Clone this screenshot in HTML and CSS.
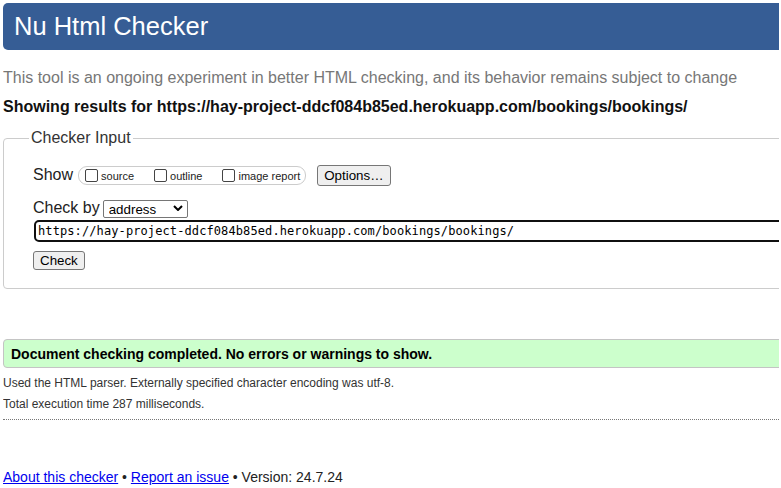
FILE: index.html
```html
<!DOCTYPE html>
<html lang="en">
<head>
<meta charset="utf-8">
<title>Nu Html Checker</title>
<link rel="stylesheet" href="styles.css">
</head>
<body>
<div class="page">
  <h1 class="title">Nu Html Checker</h1>
  <p class="intro">This tool is an ongoing experiment in better HTML checking, and its behavior remains subject to change</p>
  <p class="target">Showing results for https://hay-project-ddcf084b85ed.herokuapp.com/bookings/bookings/</p>
  <form class="checker">
    <fieldset class="fs">
      <legend class="fs-legend">Checker Input</legend>
      <div class="row row-show">
        <span class="label">Show</span>
        <span class="opts">
          <label class="opt"><input type="checkbox" class="cb"><span class="opt-text">source</span></label>
          <label class="opt"><input type="checkbox" class="cb"><span class="opt-text">outline</span></label>
          <label class="opt"><input type="checkbox" class="cb"><span class="opt-text">image report</span></label>
        </span>
        <button type="button" class="btn btn-options">Options…</button>
      </div>
      <div class="row row-by">
        <span class="label">Check by</span>
        <span class="select-wrap">
          <select class="sel"><option>address</option></select>
          <svg class="chev" width="10" height="6" viewBox="0 0 10 6"><path d="M1 1 L5 5 L9 1" fill="none" stroke="#000" stroke-width="2"/></svg>
        </span>
      </div>
      <div class="row row-url">
        <input class="url" type="text" value="https://hay-project-ddcf084b85ed.herokuapp.com/bookings/bookings/">
      </div>
      <div class="row row-check">
        <button type="button" class="btn">Check</button>
      </div>
    </fieldset>
  </form>
  <p class="result">Document checking completed. No errors or warnings to show.</p>
  <p class="info info-first">Used the HTML parser. Externally specified character encoding was utf-8.</p>
  <p class="info info-second">Total execution time 287 milliseconds.</p>
  <hr class="sep">
  <p class="footer"><a class="link" href="#">About this checker</a> • <a class="link" href="#">Report an issue</a> • Version: 24.7.24</p>
</div>
</body>
</html>
```
FILE: styles.css
```css
html {
  overflow: hidden;
  background: #fff;
}
body {
  margin: 0;
  font-family: "Liberation Sans", Arial, sans-serif;
  color: #222;
}
.page {
  width: 776px;
  margin: 3px 0 0 3px;
  overflow: hidden;
}
.title {
  margin: 0;
  width: calc(100% + 30px);
  height: 47px;
  box-sizing: border-box;
  background: #365d95;
  color: #fff;
  font-size: 25.5px;
  font-weight: normal;
  line-height: 46px;
  padding-left: 11px;
  border-radius: 5px;
}
.intro {
  margin: 19px 0 0;
  font-size: 16px;
  line-height: 18px;
  color: #777;
}
.target {
  margin: 11px 0 0;
  font-size: 16px;
  line-height: 18px;
  font-weight: bold;
  color: #111;
}
.checker {
  margin: 13px 0 0;
}
.fs {
  margin: 0;
  width: calc(100% + 30px);
  box-sizing: border-box;
  border: 1px solid #ccc;
  border-radius: 4px;
  padding: 0 0 18px 29px;
  min-width: 0;
}
.fs-legend {
  font-size: 16px;
  line-height: 18px;
  color: #333;
  padding: 0 2px;
  margin-left: -4px;
}
.row {
  display: flex;
  align-items: center;
}
.row-show {
  margin-top: 18px;
  height: 21px;
}
.label {
  font-size: 16px;
  line-height: 18px;
  color: #222;
}
.row-show .label {
  margin-right: 5px;
  margin-top: -1px;
}
.opts {
  display: flex;
  align-items: center;
  height: 19px;
  box-sizing: border-box;
  border: 1px solid #ccc;
  border-radius: 9px;
  padding: 0 5px 0 6px;
  gap: 20px;
}
.opt {
  display: flex;
  align-items: center;
  gap: 3px;
  font-size: 11px;
  line-height: 13px;
  color: #222;
}
.opt-text {
  padding-top: 2px;
}
.cb {
  appearance: none;
  -webkit-appearance: none;
  width: 13px;
  height: 13px;
  margin: 0;
  box-sizing: border-box;
  border: 1px solid #444;
  border-radius: 2px;
  background: #fff;
}
.btn {
  font-family: "Liberation Sans", Arial, sans-serif;
  font-size: 13.333px;
  line-height: 15px;
  padding: 1px 6px;
  border: 1px solid #767676;
  border-radius: 3px;
  background: #efefef;
  color: #000;
  margin: 0;
}
.btn-options {
  margin-left: 11px;
  height: 21px;
}
.row-by {
  margin-top: 14px;
  height: 18px;
}
.row-by .label {
  margin-right: 3px;
  margin-top: -2px;
}
.select-wrap {
  position: relative;
  display: block;
}
.sel {
  appearance: none;
  -webkit-appearance: none;
  display: block;
  width: 85px;
  height: 18px;
  box-sizing: border-box;
  border: 1px solid #767676;
  border-radius: 2px;
  background: #fff;
  color: #000;
  font-family: "Liberation Sans", Arial, sans-serif;
  font-size: 13.333px;
  line-height: 15px;
  padding: 0 0 0 5px;
  margin: 0;
}
.chev {
  position: absolute;
  right: 5px;
  top: 5px;
  pointer-events: none;
}
.row-url {
  margin-top: 2px;
}
.url {
  flex: none;
  width: 800px;
  height: 22px;
  box-sizing: border-box;
  margin: 0 0 0 1px;
  border: 2px solid #101010;
  border-radius: 5px;
  padding: 0 0 0 2px;
  font-family: "DejaVu Sans Mono", "Liberation Mono", monospace;
  font-size: 12px;
  letter-spacing: 0.1px;
  color: #000;
  outline: none;
}
.row-check {
  margin-top: 9px;
}
.result {
  margin: 50px 0 0;
  width: calc(100% + 30px);
  box-sizing: border-box;
  background: #ccffcc;
  border: 1px solid #c4c4c4;
  border-radius: 4px;
  padding: 6px 7px 5px;
  font-size: 14px;
  line-height: 16px;
  font-weight: bold;
  color: #000;
}
.info {
  font-size: 12px;
  line-height: 14px;
  color: #333;
  margin: 0;
}
.info-first {
  margin-top: 8px;
}
.info-second {
  margin-top: 7px;
}
.sep {
  margin: 8px 0 0;
  width: calc(100% + 30px);
  border: 0;
  border-top: 1px dotted #777;
  height: 0;
}
.footer {
  margin: 49px 0 0;
  font-size: 14px;
  line-height: 16px;
  color: #222;
}
.link {
  color: #0000ee;
}
```
